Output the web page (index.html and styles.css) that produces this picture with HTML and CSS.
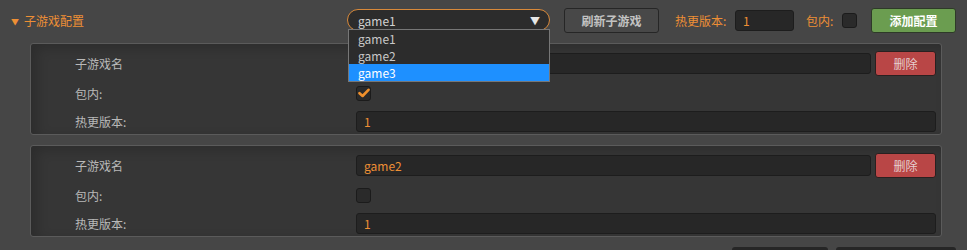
FILE: index.html
```html
<!DOCTYPE html>
<html lang="zh-CN">
<head>
    <meta charset="UTF-8">
    <meta name="viewport" content="width=device-width, initial-scale=1.0">
    <title>子游戏配置</title>
    <link rel="stylesheet" href="styles.css">
</head>
<body>
    <div class="header">
        <div class="title"><span class="fold">▼</span>子游戏配置</div>
        <div class="toolbar">
            <div class="select">
                <span>game1</span>
                <span class="arrow">▼</span>
                <ul class="options">
                    <li>game1</li>
                    <li>game2</li>
                    <li class="active">game3</li>
                </ul>
            </div>
            <button class="btn refresh">刷新子游戏</button>
            <label class="tool-label">热更版本:</label>
            <div class="input small">1</div>
            <label class="tool-label pack">包内:</label>
            <span class="check"></span>
            <button class="btn add">添加配置</button>
        </div>
    </div>

    <div class="panel">
        <div class="label">子游戏名</div>
        <div class="name-row">
            <div class="input"></div>
            <button class="btn remove">删除</button>
        </div>
        <div class="label">包内:</div>
        <div class="cell">
            <span class="check">
                <svg width="12" height="10" viewBox="0 0 12 10"><path d="M1.5 5.2 L4.6 8 L10.5 1.8" fill="none" stroke="#f0902c" stroke-width="2.6" stroke-linecap="round" stroke-linejoin="round"/></svg>
            </span>
        </div>
        <div class="label">热更版本:</div>
        <div class="input">1</div>
    </div>

    <div class="panel">
        <div class="label">子游戏名</div>
        <div class="name-row">
            <div class="input">game2</div>
            <button class="btn remove">删除</button>
        </div>
        <div class="label">包内:</div>
        <div class="cell"><span class="check"></span></div>
        <div class="label">热更版本:</div>
        <div class="input">1</div>
    </div>

    <div class="footer">
        <span class="foot-box first"></span>
        <span class="foot-box"></span>
    </div>
</body>
</html>
```

FILE: styles.css
```css
body {
    margin: 0;
    background-color: #464646;
    font-family: "Microsoft YaHei", "Noto Sans CJK SC", sans-serif;
    font-size: 12px;
    color: #bdbdbd;
    height: 250px;
    overflow: hidden;
}

.header {
    display: flex;
    justify-content: space-between;
    align-items: center;
    height: 40px;
    padding: 0 11px 0 11px;
}

.title {
    color: #ee8f35;
    font-size: 12px;
}

.fold {
    font-size: 8px;
    margin-right: 5px;
    position: relative;
    top: -1px;
}

.toolbar {
    display: flex;
    align-items: center;
}

.select {
    position: relative;
    box-sizing: border-box;
    width: 203px;
    height: 22px;
    border: 1px solid #d8893a;
    border-radius: 11px;
    background-color: #2c2c2c;
    color: #d2d2d2;
    display: flex;
    align-items: center;
    justify-content: space-between;
    padding: 0 9px 0 10px;
    font-size: 12px;
}

.arrow {
    font-size: 10px;
    color: #e6e6e6;
}

.options {
    position: absolute;
    top: 19px;
    left: 0;
    width: 202px;
    box-sizing: border-box;
    margin: 0;
    padding: 0;
    list-style: none;
    background-color: #2c2c2c;
    border: 1px solid #777;
    z-index: 2;
}

.options li {
    height: 17px;
    line-height: 17px;
    padding-left: 9px;
    color: #c8c8c8;
    font-size: 12px;
}

.options li.active {
    background-color: #1e90ff;
    color: #fff;
}

.btn {
    font-family: inherit;
    font-size: 12px;
    font-weight: bold;
    border-radius: 3px;
    cursor: pointer;
}

.refresh {
    margin-left: 14px;
    width: 95px;
    height: 25px;
    background-color: #484848;
    border: 1px solid #262626;
    color: #c2c2c2;
}

.tool-label {
    color: #ee8f35;
    width: 60px;
    flex-shrink: 0;
    margin-left: 16px;
}

.tool-label.pack {
    width: 36px;
    margin-left: 12px;
}

.input {
    box-sizing: border-box;
    height: 21px;
    line-height: 19px;
    background-color: #272727;
    border: 1px solid #1d1d1d;
    border-radius: 3px;
    color: #ee8f35;
    padding-left: 7px;
    font-size: 12px;
}

.input.small {
    width: 59px;
}

.check {
    display: inline-flex;
    align-items: center;
    justify-content: center;
    flex-shrink: 0;
    box-sizing: border-box;
    width: 15px;
    height: 15px;
    background-color: #2a2a2a;
    border: 1px solid #1b1b1b;
    border-radius: 3px;
}

.add {
    margin-left: 14px;
    width: 85px;
    height: 25px;
    background-color: #6b9d50;
    border: 1px solid #2e3a28;
    color: #fff;
}

.panel {
    display: grid;
    grid-template-columns: 281px 1fr;
    grid-template-rows: 26px 28px 22px;
    row-gap: 3px;
    align-items: center;
    margin: 3px 25px 0 30px;
    padding: 6px 5px 7px 44px;
    height: 77px;
    background-color: #363636;
    border: 1px solid #5b5b5b;
    border-radius: 3px;
    box-shadow: inset 6px 4px 12px rgba(0, 0, 0, 0.18);
}

.panel + .panel {
    margin-top: 10px;
}

.label {
    color: #b9b9b9;
}

.name-row {
    display: flex;
    align-items: center;
    gap: 4px;
}

.name-row .input {
    flex: 1;
}

.cell {
    display: flex;
    align-items: center;
}

.remove {
    width: 61px;
    height: 25px;
    background-color: #b94646;
    border: 1px solid #2a2020;
    color: #e6d0d0;
    font-weight: normal;
}

.footer {
    display: flex;
    justify-content: flex-end;
    gap: 8px;
    margin-top: 10px;
    padding-right: 11px;
}

.foot-box {
    width: 120px;
    height: 24px;
    background-color: #262626;
    border-radius: 3px;
}

.foot-box.first {
    width: 96px;
}
```
